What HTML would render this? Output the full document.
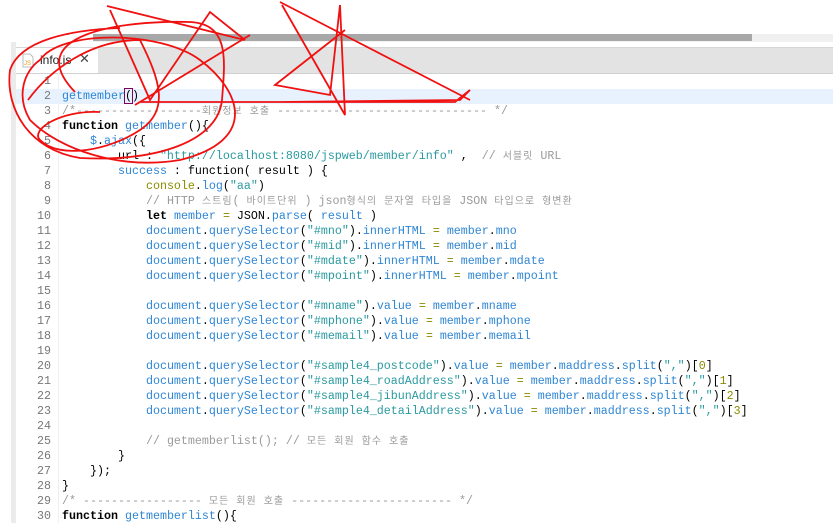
<!DOCTYPE html>
<html><head><meta charset="utf-8"><style>
body{margin:0;width:833px;height:523px;overflow:hidden;background:#fff;position:relative;font-family:"Liberation Sans",sans-serif}
.track{position:absolute;left:93px;top:34px;width:740px;height:8px;background:#f0f0f0}
.thumb{position:absolute;left:93px;top:34px;width:659px;height:7px;background:#a8a8a8}
.strip{position:absolute;left:11px;top:42px;width:5px;height:481px;background:#ebebeb}
.tabbar{position:absolute;left:16px;top:47px;width:817px;height:25px;background:#e3e3e3;border-top:1px solid #d6d6d6;border-bottom:1px solid #d0d0d0}
.tab{position:absolute;left:0;top:0;width:82px;height:25px;background:#fff;font-size:12px;color:#222}
.tab .t{position:absolute;left:24px;top:5px}
.tab .x{position:absolute;left:63px;top:3px;font-size:13px;color:#444}
.code{position:absolute;left:16px;top:74px;width:817px;font-family:"Liberation Mono","Noto Sans CJK KR",monospace;font-size:11.67px;line-height:15px}
.ln{display:block;height:15px;white-space:pre;position:relative}
.ln i{font-style:normal;display:inline-block;width:35px;text-align:right;color:#787878;margin-right:11px}
.hl{background:#e8f2fe}
.gut{position:absolute;left:58px;top:72px;width:1px;height:451px;background:#f0f0f0}
.k{color:#000;font-weight:bold}.b{color:#2f86d4}.s{color:#2a9aa0}.c{color:#9a9a9a}.o{color:#8a8a00}.d{color:#000}
.kr{font-size:10px;letter-spacing:1px}
</style></head><body>
<div class="track"></div><div class="thumb"></div>
<div style="position:absolute;left:66px;top:33px;font-size:10px;color:#333">`</div>
<div class="strip"></div>
<div class="tabbar"><div class="tab">
<svg style="position:absolute;left:6px;top:5px" width="12" height="15"><path d="M1 1h7l3 3v10H1z" fill="#fff" stroke="#bbb"/><text x="2" y="12" font-size="6" fill="#e0a020" font-family="Liberation Sans">JS</text></svg>
<span class="t">info.js</span><span class="x">✕</span></div></div>
<div class="gut"></div>
<div class="code">
<span class="ln"><i>1</i></span>
<span class="ln hl"><i>2</i><span class="b">getmember</span><span style="outline:1px solid #800060">(</span>)</span>
<span class="ln"><i>3</i><span class="c">/*------------------<span class="kr">회원정보 호출</span> ------------------------------ */</span></span>
<span class="ln"><i>4</i><span class="k">function</span> <span class="b">getmember</span>(){</span>
<span class="ln"><i>5</i>    <span class="b">$</span>.<span class="b">ajax</span>({</span>
<span class="ln"><i>6</i>        url : <span class="s">"http://localhost:8080/jspweb/member/info"</span> ,  <span class="c">// <span class="kr">서블릿</span> URL</span></span>
<span class="ln"><i>7</i>        <span class="b">success</span> : <span class="k" style="font-weight:normal">function</span>( result ) {</span>
<span class="ln"><i>8</i>            <span class="o">console</span>.<span class="b">log</span>(<span class="s">"aa"</span>)</span>
<span class="ln"><i>9</i>            <span class="c">// HTTP <span class="kr">스트림</span>( <span class="kr">바이트단위</span> ) json<span class="kr">형식의 문자열 타입을</span> JSON <span class="kr">타입으로 형변환</span></span></span>
<span class="ln"><i>10</i>            <span class="k">let</span> <span class="b">member</span> <span class="o">=</span> JSON.<span class="b">parse</span>( <span class="b">result</span> )</span>
<span class="ln"><i>11</i>            <span class="b">document</span>.<span class="b">querySelector</span>(<span class="s">"#mno"</span>).<span class="b">innerHTML</span> <span class="o">=</span> <span class="b">member</span>.<span class="b">mno</span></span>
<span class="ln"><i>12</i>            <span class="b">document</span>.<span class="b">querySelector</span>(<span class="s">"#mid"</span>).<span class="b">innerHTML</span> <span class="o">=</span> <span class="b">member</span>.<span class="b">mid</span></span>
<span class="ln"><i>13</i>            <span class="b">document</span>.<span class="b">querySelector</span>(<span class="s">"#mdate"</span>).<span class="b">innerHTML</span> <span class="o">=</span> <span class="b">member</span>.<span class="b">mdate</span></span>
<span class="ln"><i>14</i>            <span class="b">document</span>.<span class="b">querySelector</span>(<span class="s">"#mpoint"</span>).<span class="b">innerHTML</span> <span class="o">=</span> <span class="b">member</span>.<span class="b">mpoint</span></span>
<span class="ln"><i>15</i></span>
<span class="ln"><i>16</i>            <span class="b">document</span>.<span class="b">querySelector</span>(<span class="s">"#mname"</span>).<span class="b">value</span> <span class="o">=</span> <span class="b">member</span>.<span class="b">mname</span></span>
<span class="ln"><i>17</i>            <span class="b">document</span>.<span class="b">querySelector</span>(<span class="s">"#mphone"</span>).<span class="b">value</span> <span class="o">=</span> <span class="b">member</span>.<span class="b">mphone</span></span>
<span class="ln"><i>18</i>            <span class="b">document</span>.<span class="b">querySelector</span>(<span class="s">"#memail"</span>).<span class="b">value</span> <span class="o">=</span> <span class="b">member</span>.<span class="b">memail</span></span>
<span class="ln"><i>19</i></span>
<span class="ln"><i>20</i>            <span class="b">document</span>.<span class="b">querySelector</span>(<span class="s">"#sample4_postcode"</span>).<span class="b">value</span> <span class="o">=</span> <span class="b">member</span>.<span class="b">maddress</span>.<span class="b">split</span>(<span class="s">","</span>)[<span class="o">0</span>]</span>
<span class="ln"><i>21</i>            <span class="b">document</span>.<span class="b">querySelector</span>(<span class="s">"#sample4_roadAddress"</span>).<span class="b">value</span> <span class="o">=</span> <span class="b">member</span>.<span class="b">maddress</span>.<span class="b">split</span>(<span class="s">","</span>)[<span class="o">1</span>]</span>
<span class="ln"><i>22</i>            <span class="b">document</span>.<span class="b">querySelector</span>(<span class="s">"#sample4_jibunAddress"</span>).<span class="b">value</span> <span class="o">=</span> <span class="b">member</span>.<span class="b">maddress</span>.<span class="b">split</span>(<span class="s">","</span>)[<span class="o">2</span>]</span>
<span class="ln"><i>23</i>            <span class="b">document</span>.<span class="b">querySelector</span>(<span class="s">"#sample4_detailAddress"</span>).<span class="b">value</span> <span class="o">=</span> <span class="b">member</span>.<span class="b">maddress</span>.<span class="b">split</span>(<span class="s">","</span>)[<span class="o">3</span>]</span>
<span class="ln"><i>24</i></span>
<span class="ln"><i>25</i>            <span class="c">// getmemberlist(); // <span class="kr">모든 회원 함수 호출</span></span></span>
<span class="ln"><i>26</i>        }</span>
<span class="ln"><i>27</i>    });</span>
<span class="ln"><i>28</i>}</span>
<span class="ln"><i>29</i><span class="c">/* ----------------- <span class="kr">모든 회원 호출</span> ----------------------- */</span></span>
<span class="ln"><i>30</i><span class="k">function</span> <span class="b">getmemberlist</span>(){</span>
</div>
<svg style="position:absolute;left:0;top:0" width="833" height="523" fill="none" stroke="#f01010" stroke-width="1.8">
<path d="M75 92 C20 35 120 20 190 22 C230 24 225 60 222 100 C218 140 160 162 80 158 C30 150 5 110 10 70 C20 40 70 30 120 28"/>
<path d="M40 60 C60 30 160 30 200 60 C240 90 260 140 180 160 C120 170 60 150 30 120 C15 95 25 70 40 60"/>
<path d="M28 100 C50 70 90 40 140 40 C160 80 170 110 140 130 C110 150 60 160 40 140 C30 130 60 110 100 112"/>
<path d="M107 6 L245 40 L210 12 L150 100 L110 10"/>
<path d="M135 105 L250 35 L140 102 L300 102 L455 102 L470 90 L460 100 L280 102"/>
<path d="M282 5 L345 115 L340 5 L330 95 L275 85 L345 30"/>
<path d="M280 2 L470 100"/>
</svg>
</body></html>
